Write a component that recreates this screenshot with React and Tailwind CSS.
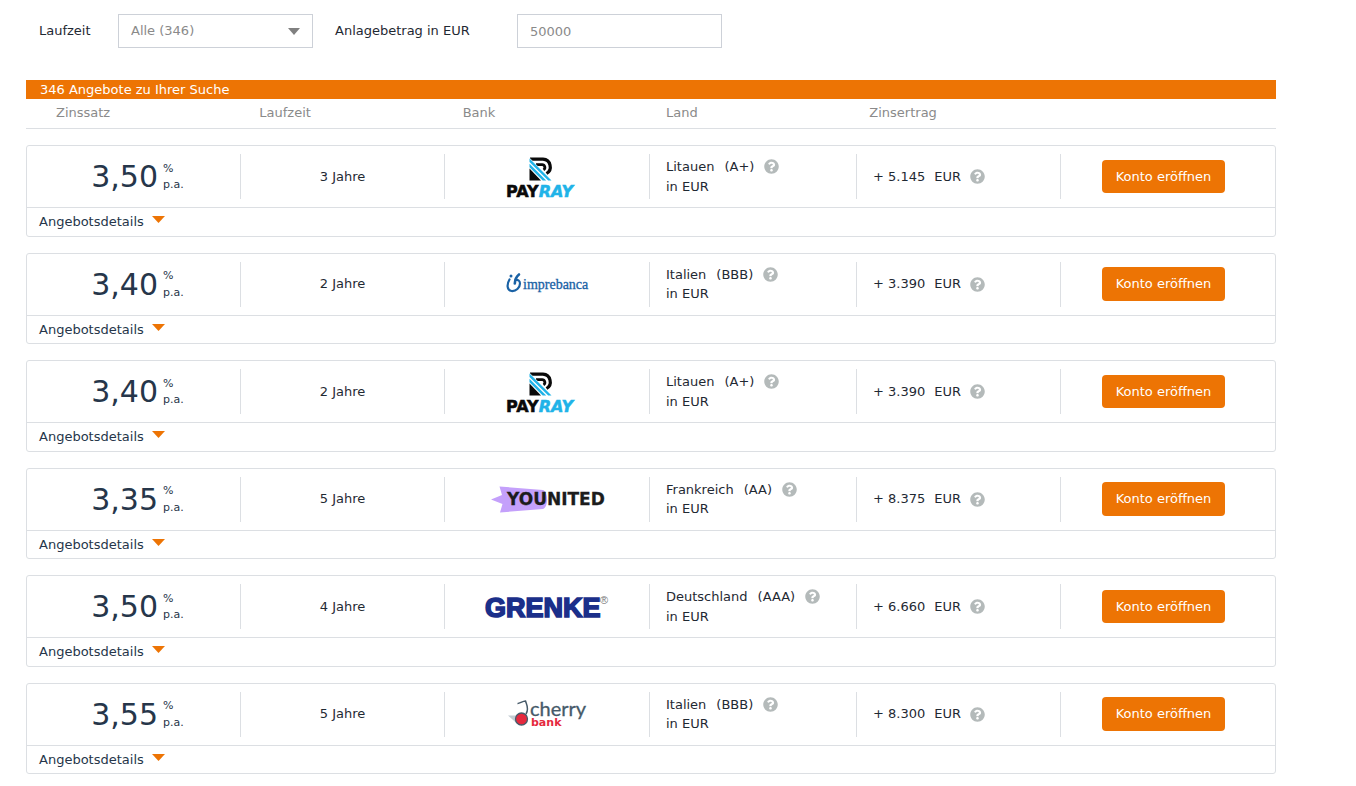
import { useState } from 'react'
import { FaQuestionCircle } from 'react-icons/fa'

const OFFERS = [
  { rate: '3,50', term: '3 Jahre', bank: 'payray', country: 'Litauen', rating: 'A+', yield: '5.145' },
  { rate: '3,40', term: '2 Jahre', bank: 'imprebanca', country: 'Italien', rating: 'BBB', yield: '3.390' },
  { rate: '3,40', term: '2 Jahre', bank: 'payray', country: 'Litauen', rating: 'A+', yield: '3.390' },
  { rate: '3,35', term: '5 Jahre', bank: 'younited', country: 'Frankreich', rating: 'AA', yield: '8.375' },
  { rate: '3,50', term: '4 Jahre', bank: 'grenke', country: 'Deutschland', rating: 'AAA', yield: '6.660' },
  { rate: '3,55', term: '5 Jahre', bank: 'cherry', country: 'Italien', rating: 'BBB', yield: '8.300' },
]

const COLUMNS = ['Zinssatz', 'Laufzeit', 'Bank', 'Land', 'Zinsertrag']

export default function App() {
  const [amount, setAmount] = useState('50000')

  return (
    <main className="ml-[26px] mr-20 pt-[14px] font-['DejaVu_Sans',Verdana,sans-serif] text-[13px] leading-normal text-[#1f2933]">
      <form className="flex items-center pl-[13px]">
        <label htmlFor="term" className="w-[79px]">Laufzeit</label>
        <div className="relative w-[195px]">
          <select
            id="term"
            className="h-[34px] w-full appearance-none border border-[#cdd1d8] bg-white px-3 text-[#8a8a8a]"
          >
            <option>Alle (346)</option>
          </select>
          <Triangle className="pointer-events-none absolute right-[13px] top-[14px] h-[7px] w-3 text-[#808080]" />
        </div>
        <label htmlFor="amount" className="ml-[22px] w-[182px]">Anlagebetrag in EUR</label>
        <input
          id="amount"
          type="text"
          value={amount}
          onChange={(e) => setAmount(e.target.value)}
          className="h-[34px] w-[205px] border border-[#cdd1d8] bg-white px-3 text-[#8a8a8a]"
        />
      </form>

      <h1 className="mt-8 bg-[#ed7404] pl-[14px] leading-[19px] text-white">346 Angebote zu Ihrer Suche</h1>
      <div className="grid grid-cols-6 border-b border-[#dcdfe3] pb-[5px] pl-[30px] pt-1 leading-5 text-[#8a8a8a]">
        {COLUMNS.map((name) => <span key={name}>{name}</span>)}
      </div>

      <ul className="mt-4 flex flex-col gap-4">
        {OFFERS.map((offer, i) => <OfferCard key={i} offer={offer} />)}
      </ul>
    </main>
  )
}

function OfferCard({ offer }) {
  const Logo = LOGOS[offer.bank]
  return (
    <li className="rounded-[3px] border border-[#dcdfe3]">
      <div className="grid grid-cols-[214fr_204fr_205fr_207fr_204fr_214fr] border-b border-[#dcdfe3] py-2">
        <Cell className="justify-center gap-[5px] pl-2 pt-px text-[#26364a]">
          <span className="text-[30px] leading-none">{offer.rate}</span>
          <span className="flex flex-col text-[11px]">
            <span>%</span>
            <span>p.a.</span>
          </span>
        </Cell>
        <Cell className="justify-center">{offer.term}</Cell>
        <Cell className="justify-center"><Logo /></Cell>
        <Cell className="pl-4">
          <div>
            <div className="flex items-center gap-2.5">
              <span>{offer.country}</span>
              <span>({offer.rating})</span>
              <Help label="Länderrating" />
            </div>
            <div>in EUR</div>
          </div>
        </Cell>
        <Cell className="gap-[9px] pl-4">
          <span>+ {offer.yield}</span>
          <span>EUR</span>
          <Help label="Zinsertrag" />
        </Cell>
        <div className="flex h-[45px] items-center justify-center pr-[9px]">
          <button type="button" className="rounded-[4px] bg-[#ed7404] px-[14px] py-[7px] text-white">
            Konto eröffnen
          </button>
        </div>
      </div>
      <button type="button" className="flex items-center gap-2 px-3 py-1 text-[#26364a]">
        Angebotsdetails
        <Triangle className="mb-1 h-[7px] w-[13px] text-[#ed7404]" />
      </button>
    </li>
  )
}

function Cell({ className, children }) {
  return (
    <div className={`flex h-[45px] items-center border-r border-[#dcdfe3] ${className}`}>
      {children}
    </div>
  )
}

function Help({ label }) {
  return (
    <button type="button" aria-label={label} className="text-[#b4baba]">
      <FaQuestionCircle className="size-[15px]" />
    </button>
  )
}

function Triangle({ className }) {
  return (
    <svg viewBox="0 0 12 7" preserveAspectRatio="none" fill="currentColor" className={className} aria-hidden="true">
      <path d="M0 0h12L6 7z" />
    </svg>
  )
}

function LogoFrame({ label, children }) {
  return (
    <svg width="130" height="46" viewBox="0 0 130 46" role="img" aria-label={label} className="shrink-0">
      {children}
    </svg>
  )
}

function PayrayLogo() {
  return (
    <LogoFrame label="PayRay">
      <g fill="none" stroke="#0a0a0a">
        <path d="M48 5.200H61a7.700 7.700 0 0 1 3.500 14.300" strokeWidth="3.200" />
        <path d="M54 10.700H60a2.800 2.800 0 0 1 1.500 5.200" strokeWidth="2.800" />
      </g>
      <path d="M47.500 14.500v12H59z" fill="#0a0a0a" />
      <path d="M47.500 3.700l22.500 22.800h-10L47.500 13.500z" fill="#fff" />
      <path d="M47.500 4.500l22 22h-3.300L47.500 7.900zM47.500 9.800l16.700 16.700h-3.500L47.500 13.300z" fill="#20b3e8" />
      <text x="24" y="43" fontFamily="DejaVu Sans, sans-serif" fontSize="16" fontWeight="700" fill="#0a0a0a" stroke="#0a0a0a" strokeWidth="0.500">
        PAY<tspan fill="#20b3e8" stroke="#20b3e8" fontStyle="italic">RAY</tspan>
      </text>
    </LogoFrame>
  )
}

function ImprebancaLogo() {
  return (
    <LogoFrame label="imprebanca">
      <g fill="none" stroke="#1a62a5" strokeLinecap="round">
        <path d="M27.500 18.500c-3 5-2.500 11 2 11.500 4.500.5 8.500-3.500 8.500-7.500 0-3-2.500-4-4.500-3.500" strokeWidth="2.200" />
        <path d="M37 13.500c-2.500 2-4 5-4.200 9" strokeWidth="2.600" />
      </g>
      <circle cx="29" cy="15" r="1.500" fill="#1a62a5" />
      <text x="41" y="28" fontFamily="Liberation Serif, serif" fontSize="14" fill="#1a62a5" stroke="#1a62a5" strokeWidth="0.300">
        imprebanca
      </text>
    </LogoFrame>
  )
}

function YounitedLogo() {
  return (
    <LogoFrame label="Younited">
      <path d="M9 23.500l11-4.500-2.500-8.500L61 14c5.500 2 5.500 17 0 19l-43 3.500 2.500-8.500z" fill="#c4a0fb" />
      <text x="25" y="29" fontFamily="DejaVu Sans, sans-serif" fontSize="17" fontWeight="700" fill="#1c1c1c" stroke="#1c1c1c" strokeWidth="0.300">
        YOUNITED
      </text>
    </LogoFrame>
  )
}

function GrenkeLogo() {
  return (
    <LogoFrame label="Grenke">
      <text x="3" y="33" fontFamily="Liberation Sans, sans-serif" fontSize="27" fontWeight="700" fill="#1b2f8a" stroke="#1b2f8a" strokeWidth="1.600">
        GRENKE
      </text>
      <text x="118" y="20" fontFamily="Liberation Sans, sans-serif" fontSize="11" fill="#777">®</text>
    </LogoFrame>
  )
}

function CherryLogo() {
  return (
    <LogoFrame label="Cherry Bank">
      <path d="M26 24.500h9v8z" fill="#c3ccd2" />
      <path d="M35.500 12.500c2 .3 5-2.500 8-2.500 1 3.500 4 7.500.5 13" fill="none" stroke="#465a69" strokeWidth="1.500" />
      <circle cx="39.500" cy="28" r="6" fill="#e5293e" stroke="#465a69" strokeWidth="1.300" />
      <text x="48" y="25" fontFamily="Lato, sans-serif" fontSize="20" fill="#465a69" stroke="#465a69" strokeWidth="0.300">cherry</text>
      <text x="49" y="35" fontFamily="DejaVu Sans, sans-serif" fontSize="11" fontWeight="700" fill="#e5293e">bank</text>
    </LogoFrame>
  )
}

const LOGOS = {
  payray: PayrayLogo,
  imprebanca: ImprebancaLogo,
  younited: YounitedLogo,
  grenke: GrenkeLogo,
  cherry: CherryLogo,
}
